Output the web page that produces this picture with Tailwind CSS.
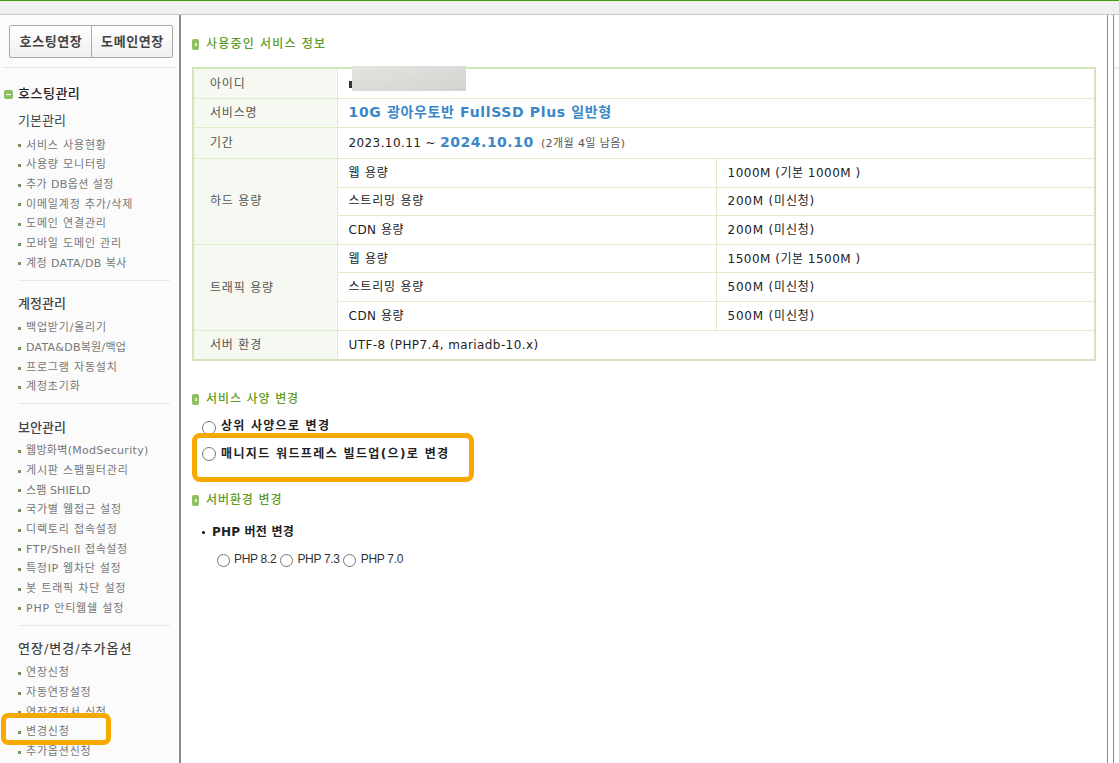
<!DOCTYPE html>
<html lang="ko">
<head>
    <meta charset="UTF-8">
    <title>호스팅관리</title>
    <script src="https://cdn.jsdelivr.net/npm/@tailwindcss/browser@4"></script>
</head>
<body class="bg-white overflow-hidden font-['DejaVu_Sans','Noto_Sans_CJK_KR',sans-serif] text-[12px] text-[#222]">
<div class="relative w-[1119px] h-[763px] overflow-hidden">
    <!-- 상단 바 -->
    <div class="h-[15px] bg-[#f0f0f0] border-t border-t-[#3f9a12] border-b border-b-[#c8c8c8]"></div>

    <div class="flex h-[748px]">
        <!-- 사이드바 -->
        <div class="w-[181px] shrink-0 bg-[#fbfbfb] border-r-2 border-r-[#8a8a8a] h-full overflow-hidden">
            <div class="h-[53px] mx-[2px] pt-[10px] pl-[7px] border-b border-b-[#e8e8e8]">
                <div class="flex w-[164px] h-[33px] border border-[#aaa] rounded-[2px] bg-gradient-to-b from-white to-[#f0f0f0] font-bold text-[13px] tracking-[0.6px] text-[#444]">
                    <div class="w-[82px] pl-px flex items-center justify-center border-r border-r-[#aaa]">호스팅연장</div>
                    <div class="flex-1 pl-px flex items-center justify-center">도메인연장</div>
                </div>
            </div>
            <div class="flex items-center gap-[5px] pl-[4px] mt-[18px] h-[16px] text-[13px] tracking-[0.5px] font-medium text-[#222]">
                <span class="w-[9px] h-[9px] rounded-[2px] bg-[#8cc063] flex items-center justify-center"><span class="w-[5px] h-px bg-white"></span></span>
                호스팅관리
            </div>
            <div class="pl-[18px] pr-[9px]">
                <div class="mt-[11px] h-[16px] leading-[16px] text-[13px] text-[#444]">기본관리</div>
                <ul class="mt-[7px] text-[#777] text-[11px] tracking-[0.8px]">
                    <li class="flex items-center gap-[5px] h-[19.7px]"><span class="w-[3px] h-[3px] bg-[#7d9160]"></span>서비스 사용현황</li>
                    <li class="flex items-center gap-[5px] h-[19.7px]"><span class="w-[3px] h-[3px] bg-[#7d9160]"></span>사용량 모니터링</li>
                    <li class="flex items-center gap-[5px] h-[19.7px] tracking-[0.4px]"><span class="w-[3px] h-[3px] bg-[#7d9160]"></span>추가 DB옵션 설정</li>
                    <li class="flex items-center gap-[5px] h-[19.7px]"><span class="w-[3px] h-[3px] bg-[#7d9160]"></span>이메일계정 추가/삭제</li>
                    <li class="flex items-center gap-[5px] h-[19.7px]"><span class="w-[3px] h-[3px] bg-[#7d9160]"></span>도메인 연결관리</li>
                    <li class="flex items-center gap-[5px] h-[19.7px]"><span class="w-[3px] h-[3px] bg-[#7d9160]"></span>모바일 도메인 관리</li>
                    <li class="flex items-center gap-[5px] h-[19.7px] tracking-[0.4px]"><span class="w-[3px] h-[3px] bg-[#7d9160]"></span>계정 DATA/DB 복사</li>
                </ul>
                <div class="mt-[6px] border-t border-t-[#e8e8e8]"></div>
                <div class="mt-[15px] h-[16px] leading-[16px] text-[13px] font-medium text-[#444]">계정관리</div>
                <ul class="mt-[7px] text-[#777] text-[11px] tracking-[0.8px]">
                    <li class="flex items-center gap-[5px] h-[19.7px]"><span class="w-[3px] h-[3px] bg-[#7d9160]"></span>백업받기/올리기</li>
                    <li class="flex items-center gap-[5px] h-[19.7px] tracking-[0.25px]"><span class="w-[3px] h-[3px] bg-[#7d9160]"></span>DATA&amp;DB복원/백업</li>
                    <li class="flex items-center gap-[5px] h-[19.7px]"><span class="w-[3px] h-[3px] bg-[#7d9160]"></span>프로그램 자동설치</li>
                    <li class="flex items-center gap-[5px] h-[19.7px]"><span class="w-[3px] h-[3px] bg-[#7d9160]"></span>계정초기화</li>
                </ul>
                <div class="mt-[5px] border-t border-t-[#e8e8e8]"></div>
                <div class="mt-[16px] h-[16px] leading-[16px] text-[13px] font-medium text-[#444]">보안관리</div>
                <ul class="mt-[6px] text-[#777] text-[11px] tracking-[0.8px]">
                    <li class="flex items-center gap-[5px] h-[19.7px] tracking-[0.3px]"><span class="w-[3px] h-[3px] bg-[#7d9160]"></span>웹방화벽(ModSecurity)</li>
                    <li class="flex items-center gap-[5px] h-[19.7px]"><span class="w-[3px] h-[3px] bg-[#7d9160]"></span>게시판 스팸필터관리</li>
                    <li class="flex items-center gap-[5px] h-[19.7px] tracking-[0.1px]"><span class="w-[3px] h-[3px] bg-[#7d9160]"></span>스팸 SHIELD</li>
                    <li class="flex items-center gap-[5px] h-[19.7px]"><span class="w-[3px] h-[3px] bg-[#7d9160]"></span>국가별 웹접근 설정</li>
                    <li class="flex items-center gap-[5px] h-[19.7px]"><span class="w-[3px] h-[3px] bg-[#7d9160]"></span>디렉토리 접속설정</li>
                    <li class="flex items-center gap-[5px] h-[19.7px] tracking-[0.55px]"><span class="w-[3px] h-[3px] bg-[#7d9160]"></span>FTP/Shell 접속설정</li>
                    <li class="flex items-center gap-[5px] h-[19.7px] tracking-[0.7px]"><span class="w-[3px] h-[3px] bg-[#7d9160]"></span>특정IP 웹차단 설정</li>
                    <li class="flex items-center gap-[5px] h-[19.7px]"><span class="w-[3px] h-[3px] bg-[#7d9160]"></span>봇 트래픽 차단 설정</li>
                    <li class="flex items-center gap-[5px] h-[19.7px]"><span class="w-[3px] h-[3px] bg-[#7d9160]"></span>PHP 안티웹쉘 설정</li>
                </ul>
                <div class="mt-[6px] border-t border-t-[#e8e8e8]"></div>
                <div class="mt-[15px] h-[16px] leading-[16px] text-[13px] tracking-[1px] font-medium text-[#444]">연장/변경/추가옵션</div>
                <ul class="mt-[7px] text-[#777] text-[11px] tracking-[0.8px]">
                    <li class="flex items-center gap-[5px] h-[19.7px]"><span class="w-[3px] h-[3px] bg-[#7d9160]"></span>연장신청</li>
                    <li class="flex items-center gap-[5px] h-[19.7px]"><span class="w-[3px] h-[3px] bg-[#7d9160]"></span>자동연장설정</li>
                    <li class="flex items-center gap-[5px] h-[19.7px]"><span class="w-[3px] h-[3px] bg-[#7d9160]"></span>연장견적서 신청</li>
                    <li class="flex items-center gap-[5px] h-[19.7px]"><span class="w-[3px] h-[3px] bg-[#7d9160]"></span>변경신청</li>
                    <li class="flex items-center gap-[5px] h-[19.7px]"><span class="w-[3px] h-[3px] bg-[#7d9160]"></span>추가옵션신청</li>
                </ul>
            </div>
        </div>

        <!-- 본문 -->
        <div class="w-[926px] shrink-0 pl-[11px] pr-[11px]">
            <h2 class="mt-[22px] h-[14px] flex items-center gap-[7px] text-[12px] tracking-[1.2px] font-medium text-[#5f9c24]">
                <span class="w-[7px] h-[11px] rounded-[2px] bg-[#8cc063] flex items-center justify-center"><span class="w-[2px] h-[3px] bg-[#dcebc8]"></span></span>사용중인 서비스 정보
            </h2>
            <table class="mt-[16px] w-[904px] table-fixed border-collapse border-2 border-[#d3e6bb] text-[12px] tracking-[0.8px]">
                <colgroup><col class="w-[144px]"><col class="w-[379px]"><col></colgroup>
                <tbody>
                    <tr class="h-[30px]">
                        <td class="bg-[#f6f9f2] border border-[#e0edcd] pl-[16px] pt-px text-[#555]">아이디</td>
                        <td colspan="2" class="border border-[#e0edcd] pl-[11px]"><span class="inline-block w-[3px] h-[7px] mt-[8px] bg-[#333]"></span></td>
                    </tr>
                    <tr class="h-[29px]">
                        <td class="bg-[#f6f9f2] border border-[#e0edcd] pl-[16px] pt-px text-[#555]">서비스명</td>
                        <td colspan="2" class="border border-[#e0edcd] pl-[11px] font-bold text-[14px] tracking-[0.65px] text-[#3c87c8]">10G 광아우토반 FullSSD Plus 일반형</td>
                    </tr>
                    <tr class="h-[31px]">
                        <td class="bg-[#f6f9f2] border border-[#e0edcd] pl-[16px] pt-px text-[#555]">기간</td>
                        <td colspan="2" class="border border-[#e0edcd] pl-[11px] tracking-[0.4px]">2023.10.11 ~ <span class="font-bold text-[14px] tracking-[0.5px] text-[#3c87c8]">2024.10.10</span> <span class="ml-[3px] text-[11px] tracking-[0.4px] text-[#555]">(2개월 4일 남음)</span></td>
                    </tr>
                    <tr class="h-[29px]">
                        <td rowspan="3" class="bg-[#f6f9f2] border border-[#e0edcd] pl-[16px] text-[#555]">하드 용량</td>
                        <td class="border border-[#e0edcd] pl-[11px]">웹 용량</td>
                        <td class="border border-[#e0edcd] pl-[11px] tracking-[0.5px]">1000M (기본 1000M )</td>
                    </tr>
                    <tr class="h-[28px]">
                        <td class="border border-[#e0edcd] pl-[11px]">스트리밍 용량</td>
                        <td class="border border-[#e0edcd] pl-[11px]">200M (미신청)</td>
                    </tr>
                    <tr class="h-[29px]">
                        <td class="border border-[#e0edcd] pl-[11px] tracking-[0.5px]">CDN 용량</td>
                        <td class="border border-[#e0edcd] pl-[11px]">200M (미신청)</td>
                    </tr>
                    <tr class="h-[28px]">
                        <td rowspan="3" class="bg-[#f6f9f2] border border-[#e0edcd] pl-[16px] pt-px text-[#555]">트래픽 용량</td>
                        <td class="border border-[#e0edcd] pl-[11px] pt-px">웹 용량</td>
                        <td class="border border-[#e0edcd] pl-[11px] pt-px tracking-[0.5px]">1500M (기본 1500M )</td>
                    </tr>
                    <tr class="h-[29px]">
                        <td class="border border-[#e0edcd] pl-[11px] pt-px">스트리밍 용량</td>
                        <td class="border border-[#e0edcd] pl-[11px] pt-px">500M (미신청)</td>
                    </tr>
                    <tr class="h-[29px]">
                        <td class="border border-[#e0edcd] pl-[11px] tracking-[0.5px]">CDN 용량</td>
                        <td class="border border-[#e0edcd] pl-[11px]">500M (미신청)</td>
                    </tr>
                    <tr class="h-[30px]">
                        <td class="bg-[#f6f9f2] border border-[#e0edcd] pl-[16px] pt-px text-[#555]">서버 환경</td>
                        <td colspan="2" class="border border-[#e0edcd] pl-[11px] tracking-[0.4px]">UTF-8 (PHP7.4, mariadb-10.x)</td>
                    </tr>
                </tbody>
            </table>

            <h2 class="mt-[31px] h-[14px] flex items-center gap-[7px] text-[12px] tracking-[0.9px] font-medium text-[#5f9c24]">
                <span class="w-[7px] h-[11px] rounded-[2px] bg-[#8cc063] flex items-center justify-center"><span class="w-[2px] h-[3px] bg-[#dcebc8]"></span></span>서비스 사양 변경
            </h2>
            <label class="mt-[11px] ml-[10px] h-[18px] flex items-center gap-[5px] font-bold text-[12px] tracking-[1.25px] text-[#222]">
                <span class="mt-[3px] w-[14px] h-[14px] rounded-full border border-[#767676] bg-white"></span>상위 사양으로 변경
            </label>
            <label class="mt-[10px] ml-[10px] h-[18px] flex items-center gap-[5px] font-bold text-[12px] tracking-[1.35px] text-[#222]">
                <span class="w-[14px] h-[14px] rounded-full border border-[#767676] bg-white"></span>매니지드 워드프레스 빌드업(으)로 변경
            </label>
            <h2 class="mt-[30px] h-[14px] flex items-center gap-[7px] text-[12px] tracking-[0.9px] font-medium text-[#5f9c24]">
                <span class="w-[7px] h-[11px] rounded-[2px] bg-[#8cc063] flex items-center justify-center"><span class="w-[2px] h-[3px] bg-[#dcebc8]"></span></span>서버환경 변경
            </h2>
            <div class="mt-[17px] ml-[10px] h-[16px] flex items-center gap-[7px] font-bold text-[12px] tracking-[0.2px] text-[#222]">
                <span class="w-[3px] h-[3px] rounded-full bg-black"></span>PHP 버전 변경
            </div>
            <div class="mt-[10px] ml-[25px] flex items-center h-[18px] font-['Liberation_Sans',sans-serif] tracking-[-0.3px] text-[#333]">
                <span class="mt-[2px] w-[13px] h-[13px] rounded-full border border-[#767676]"></span><span class="ml-[4px] mr-[4px]">PHP 8.2</span>
                <span class="mt-[2px] w-[13px] h-[13px] rounded-full border border-[#767676]"></span><span class="ml-[4px] mr-[3px]">PHP 7.3</span>
                <span class="mt-[2px] w-[13px] h-[13px] rounded-full border border-[#767676]"></span><span class="ml-[5px]">PHP 7.0</span>
            </div>
        </div>

        <!-- 오른쪽 패널 -->
        <div class="w-[6px] shrink-0 border-l border-l-[#8a8a8a] h-full"></div>
        <div class="flex-1 border-l border-l-[#8a8a8a] h-full">
            <div class="mt-[52px] h-[2px] bg-[#e8e8e8]"></div>
        </div>
    </div>

    <!-- 위에 얹은 표시 -->
    <div class="absolute left-[352px] top-[66px] w-[114px] h-[25px] bg-gradient-to-br from-[#e4e5e1] to-[#d2d2d0]"></div>
    <div class="absolute left-[192px] top-[433px] w-[282px] h-[49px] border-[5px] border-[#f8a900] rounded-[8px]"></div>
    <div class="absolute left-[1px] top-[713px] w-[110px] h-[32px] border-[5px] border-[#f8a900] rounded-[7px]"></div>
</div>
</body>
</html>
